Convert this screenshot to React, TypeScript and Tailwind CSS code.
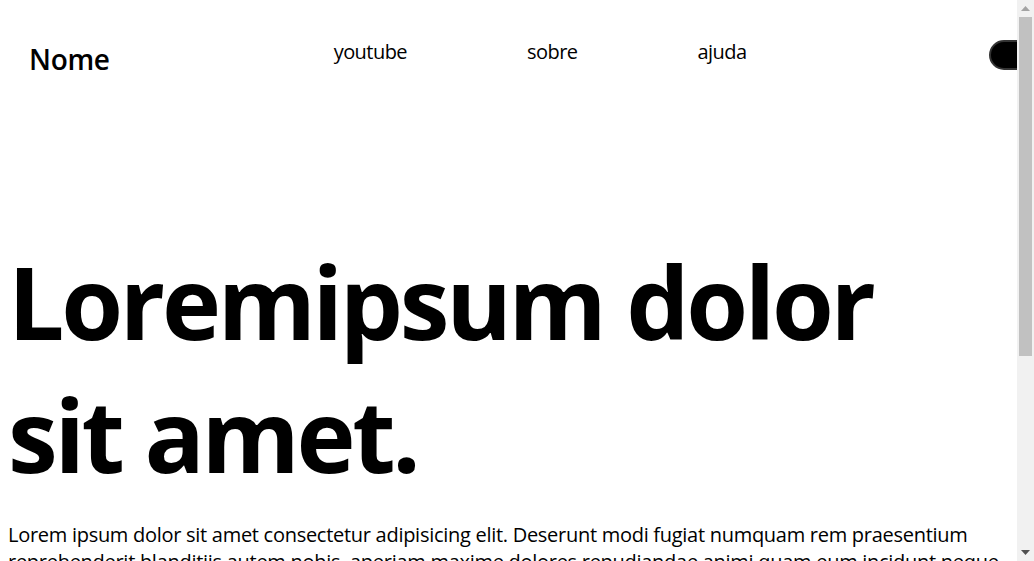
function Scrollbar() {
  return (
    <div className="flex h-full w-[17px] shrink-0 flex-col bg-[#f1f1f1]">
      <div className="flex h-[17px] items-center justify-center">
        <svg width="9" height="5" viewBox="0 0 9 5">
          <path d="M4.5 0 L9 5 L0 5 Z" fill="#a3a3a3" />
        </svg>
      </div>
      <div className="mx-[2px] h-[339px] bg-[#c1c1c1]" />
      <div className="flex-1" />
      <div className="flex h-[17px] items-center justify-center">
        <svg width="9" height="5" viewBox="0 0 9 5">
          <path d="M0 0 L9 0 L4.5 5 Z" fill="#505050" />
        </svg>
      </div>
    </div>
  );
}

export default function App() {
  return (
    <div className="flex h-screen overflow-hidden bg-white text-black font-['Open_Sans',sans-serif]">
      <div className="min-w-0 flex-1 overflow-hidden">
        <header className="flex h-[120px] items-start pl-[29px]">
          <h1 className="mt-[40px] text-[28px] font-semibold leading-[38px] tracking-[-0.3px]">Nome</h1>
          <nav className="ml-[224px] mt-[38px] flex gap-[120px] text-[20px] leading-[27px] tracking-[-0.55px]">
            <a href="#">youtube</a>
            <a href="#">sobre</a>
            <a href="#">ajuda</a>
          </nav>
          <button className="ml-auto mr-[-40px] mt-[40px] h-[30px] w-[68px] shrink-0 rounded-full border-2 border-[#333] bg-black" />
        </header>
        <main className="px-2 pt-[115px]">
          <h2 className="text-[100px] font-bold leading-[133px] tracking-[-3.3px]">
            Loremipsum dolor
            <br />
            sit amet.
          </h2>
          <p className="mt-[21px] text-[20px] leading-[26.6px] tracking-[-0.28px]">
            Lorem ipsum dolor sit amet consectetur adipisicing elit. Deserunt modi fugiat numquam rem praesentium
            reprehenderit blanditiis autem nobis, aperiam maxime dolores repudiandae animi quam eum incidunt neque.
          </p>
        </main>
      </div>
      <Scrollbar />
    </div>
  );
}
